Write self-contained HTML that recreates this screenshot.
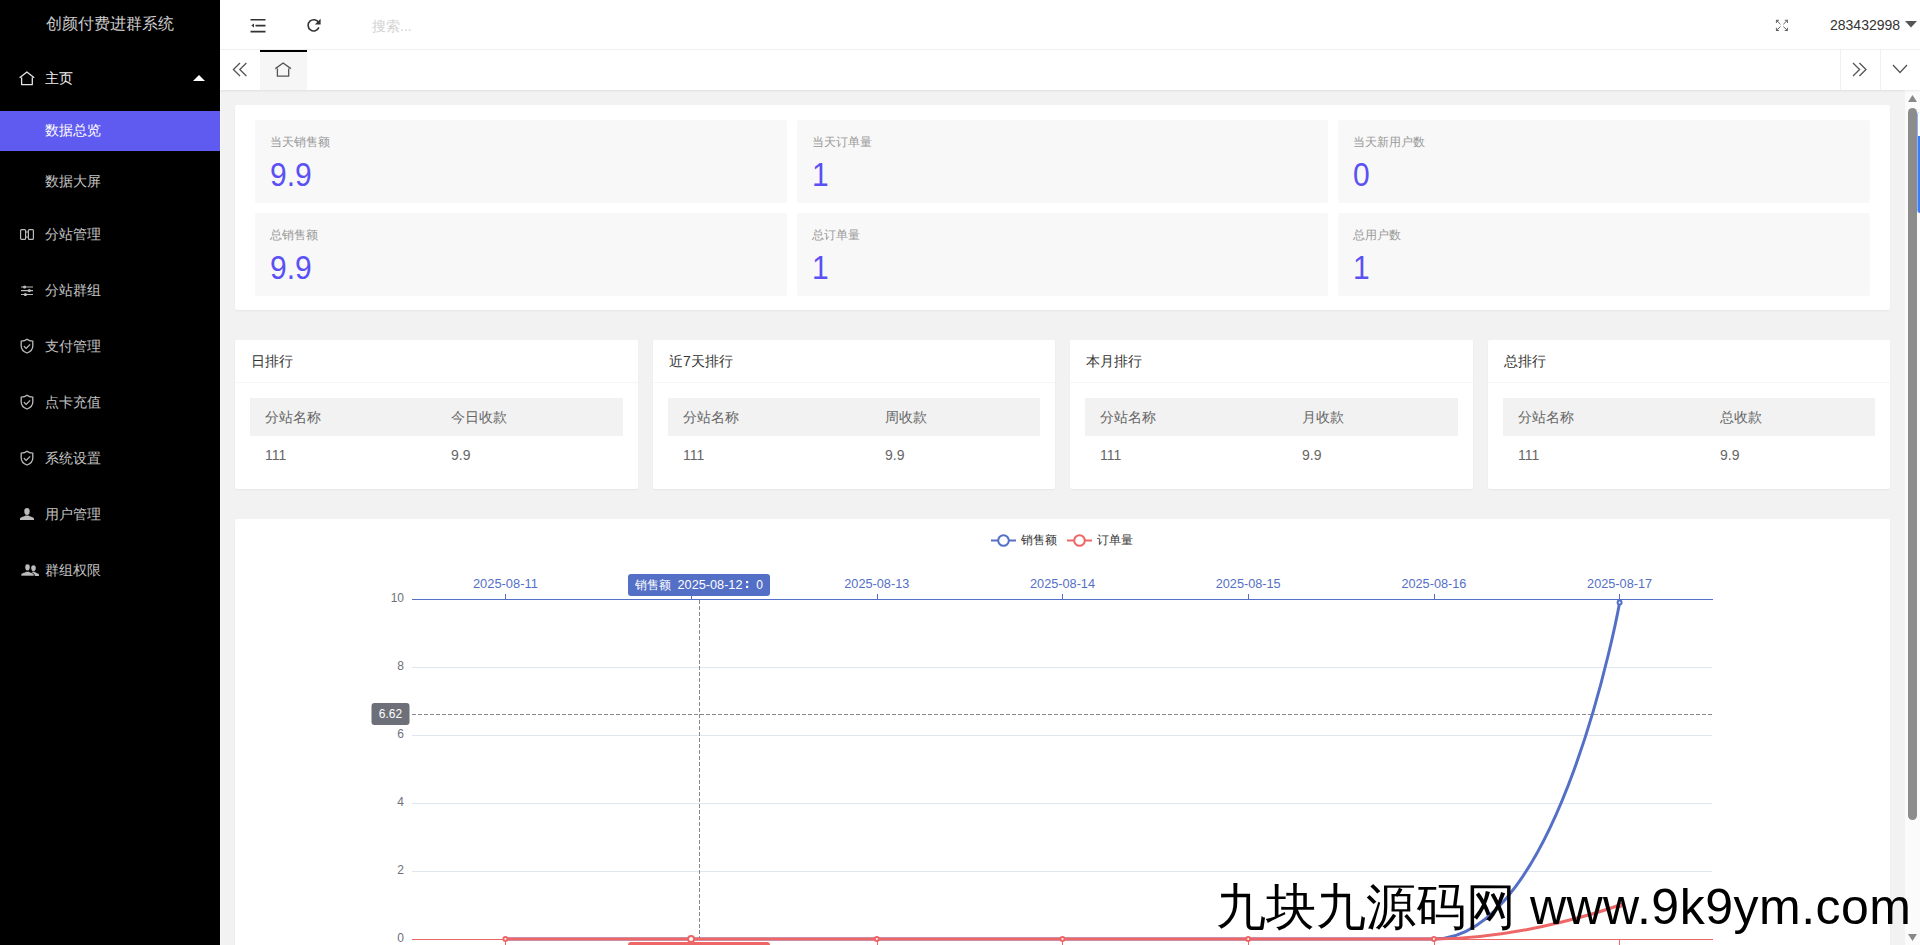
<!DOCTYPE html>
<html><head><meta charset="utf-8">
<style>
*{margin:0;padding:0;box-sizing:border-box}
html,body{width:1920px;height:945px;overflow:hidden;font-family:"Liberation Sans",sans-serif;background:#f2f2f2;position:relative}
.abs{position:absolute}
#side{position:absolute;left:0;top:0;width:220px;height:945px;background:#000}
#side .logo{position:absolute;left:0;top:0;width:220px;height:50px;line-height:48px;text-align:center;color:#ccc;font-size:16px}
.mi{position:absolute;left:0;width:220px;height:40px;color:#c4c4c4;font-size:14px}
.mi span{position:absolute;left:45px;top:0;line-height:40px}
.mi svg{position:absolute}
#hdr{position:absolute;left:220px;top:0;width:1700px;height:50px;background:#fff;border-bottom:1px solid #f0f0f0}
#tabs{position:absolute;left:220px;top:50px;width:1700px;height:40px;background:#fff;box-shadow:0 1px 2px rgba(0,0,0,.08)}
.card{position:absolute;background:#fff;border-radius:2px;box-shadow:0 1px 2px 0 rgba(0,0,0,.05)}
.tile{position:absolute;background:#f8f8f8;border-radius:2px}
.tile .lb{position:absolute;left:15px;top:13px;font-size:12px;color:#999;line-height:18px}
.tile .v{position:absolute;left:15px;top:36px;font-size:30px;color:#5b50f4;line-height:36px;transform:scaleY(1.1);transform-origin:0 8px}
.rk .t{position:absolute;left:16px;top:0;height:42px;line-height:42px;font-size:14px;color:#333}
.rk .ln{position:absolute;left:0;top:42px;width:100%;height:1px;background:#f6f6f6}
.rk .th{position:absolute;left:15px;top:58px;height:38px;background:#f2f2f2}
.rk .th span,.rk .tr span{position:absolute;font-size:14px;color:#666;line-height:38px}
.rk .tr{position:absolute;left:15px;top:96px;height:38px}
#sb{position:absolute;left:1905px;top:90px;width:15px;height:855px;background:#fbfbfb}
#tabs{z-index:2}
</style></head><body>
<div id="side">
  <div class="logo">创颜付费进群系统</div>
  <div class="mi" style="top:58px;color:#f2f2f2"><svg style="left:19px;top:13px" width="16" height="16" viewBox="0 0 16 16"><path d="M0.6 6.7 L7.9 1 L15.2 6.7 M2.6 6.5 V13.6 H13.3 V6.5" fill="none" stroke="#e6e6e6" stroke-width="1.3" stroke-linejoin="round"/></svg><span style="font-weight:500">主页</span>
    <svg style="left:193px;top:16px" width="12" height="8" viewBox="0 0 12 8"><path d="M0 7 L6 1 L12 7Z" fill="#fff"/></svg></div>
  <div class="mi" style="top:111px;background:#5f5af0;color:#fff"><span style="font-weight:500;top:-1px">数据总览</span></div>
  <div class="mi" style="top:161px"><span>数据大屏</span></div>
  <div class="mi" style="top:214px"><svg style="left:20px;top:15px" width="14" height="11" viewBox="0 0 14 11"><rect x="0.6" y="0.6" width="5" height="9.8" rx="1" fill="none" stroke="#bbb" stroke-width="1.2"/><rect x="8.4" y="0.6" width="5" height="9.8" rx="1" fill="none" stroke="#bbb" stroke-width="1.2"/><path d="M5.6 3 H8.4 M5.6 8 H8.4" stroke="#bbb" stroke-width="1"/></svg><span>分站管理</span></div>
  <div class="mi" style="top:270px"><svg style="left:21px;top:14px" width="12" height="12" viewBox="0 0 12 12"><path d="M0 3 H12 M0 6.6 H12 M0 10.5 H12" stroke="#bbb" stroke-width="1.1"/><circle cx="3.6" cy="3" r="1.6" fill="#bbb"/><circle cx="8.3" cy="6.6" r="1.6" fill="#bbb"/><circle cx="4.4" cy="10.5" r="1.6" fill="#bbb"/></svg><span>分站群组</span></div>
  <div class="mi" style="top:326px"><svg style="left:20px;top:12px" width="15" height="16" viewBox="0 0 15 16"><path d="M7 1.2 C5.6 2.4 3.2 3 1.2 3.1 V8 C1.2 11.3 3.6 13.7 7 15 C10.4 13.7 12.8 11.3 12.8 8 V3.1 C10.8 3 8.4 2.4 7 1.2Z" fill="none" stroke="#bbb" stroke-width="1.3" stroke-linejoin="round"/><path d="M3.9 8.2 L6.2 10.4 L10.1 6.4" fill="none" stroke="#bbb" stroke-width="1.3"/></svg><span>支付管理</span></div>
  <div class="mi" style="top:382px"><svg style="left:20px;top:12px" width="15" height="16" viewBox="0 0 15 16"><path d="M7 1.2 C5.6 2.4 3.2 3 1.2 3.1 V8 C1.2 11.3 3.6 13.7 7 15 C10.4 13.7 12.8 11.3 12.8 8 V3.1 C10.8 3 8.4 2.4 7 1.2Z" fill="none" stroke="#bbb" stroke-width="1.3" stroke-linejoin="round"/><path d="M3.9 8.2 L6.2 10.4 L10.1 6.4" fill="none" stroke="#bbb" stroke-width="1.3"/></svg><span>点卡充值</span></div>
  <div class="mi" style="top:438px"><svg style="left:20px;top:12px" width="15" height="16" viewBox="0 0 15 16"><path d="M7 1.2 C5.6 2.4 3.2 3 1.2 3.1 V8 C1.2 11.3 3.6 13.7 7 15 C10.4 13.7 12.8 11.3 12.8 8 V3.1 C10.8 3 8.4 2.4 7 1.2Z" fill="none" stroke="#bbb" stroke-width="1.3" stroke-linejoin="round"/><path d="M3.9 8.2 L6.2 10.4 L10.1 6.4" fill="none" stroke="#bbb" stroke-width="1.3"/></svg><span>系统设置</span></div>
  <div class="mi" style="top:494px"><svg style="left:20px;top:13px" width="14" height="14" viewBox="0 0 14 14"><path d="M7 1 C8.8 1 9.7 2.2 9.7 4.2 C9.7 6.2 8.8 8 7 8 C5.2 8 4.3 6.2 4.3 4.2 C4.3 2.2 5.2 1 7 1Z M5.6 8.6 C4.6 9.6 0.5 10.2 0 11.4 V13 H14 V11.4 C13.5 10.2 9.4 9.6 8.4 8.6Z" fill="#bbb"/></svg><span>用户管理</span></div>
  <div class="mi" style="top:550px"><svg style="left:21px;top:13px" width="18" height="14" viewBox="0 0 18 14"><path d="M12.5 2.3 C14 2.3 14.8 3.4 14.8 5 C14.8 6.7 14 8.2 12.5 8.2 C11 8.2 10.2 6.7 10.2 5 C10.2 3.4 11 2.3 12.5 2.3Z M11.4 8.8 C11 9.2 10.8 9.4 10.6 9.5 C11.8 10 13.2 10.8 13.6 12 V13 H18 V11.6 C17.6 10.6 14.6 10 13.6 8.8Z" fill="#bbb"/><path d="M6.5 1 C8.2 1 9.1 2.2 9.1 4.1 C9.1 6 8.2 7.8 6.5 7.8 C4.8 7.8 3.9 6 3.9 4.1 C3.9 2.2 4.8 1 6.5 1Z M5.2 8.4 C4.2 9.3 0.5 9.9 0 11.2 V13 H13 V11.2 C12.5 9.9 8.8 9.3 7.8 8.4Z" fill="#bbb" stroke="#000" stroke-width="0.6"/></svg><span>群组权限</span></div>
</div>
<div class="abs" style="left:220px;top:90px;width:1px;height:855px;background:#f9f9f9"></div>
<div id="hdr">
  <svg class="abs" style="left:30px;top:18px" width="16" height="15" viewBox="0 0 16 15"><path d="M0.5 1.8 H15.5 M5.5 7.6 H15.5 M0.5 13.6 H15.5" stroke="#333" stroke-width="1.6"/><path d="M1.3 7.6 L4 5.6 V9.6Z" fill="#333"/></svg>
  <svg class="abs" style="left:86px;top:17px" width="16" height="16" viewBox="0 0 16 16"><path d="M12.6 5.6 A5.6 5.6 0 1 0 12.9 10.4" fill="none" stroke="#333" stroke-width="1.6"/><path d="M14.6 1.8 V7.6 H8.8Z" fill="#333"/></svg>
  <div class="abs" style="left:152px;top:1px;line-height:50px;font-size:14px;color:#d2d2d2">搜索...</div>
  <svg class="abs" style="left:1555px;top:18px" width="14" height="15" viewBox="0 0 14 15"><g fill="none" stroke="#5a5a5a" stroke-width="0.95" stroke-linecap="round" stroke-linejoin="round"><path d="M3.6 2.3 H1.4 V4.6 M1.4 2.3 L5.2 6"/><path d="M10.2 2.3 H12.4 V4.6 M12.4 2.3 L8.6 6"/><path d="M1.4 10.2 V12.5 H3.6 M1.4 12.5 L5.2 8.8"/><path d="M12.4 10.2 V12.5 H10.2 M12.4 12.5 L8.6 8.8"/></g></svg>
  <div class="abs" style="left:1610px;top:0;line-height:50px;font-size:14px;color:#333">283432998</div>
  <svg class="abs" style="left:1685px;top:21px" width="12" height="7" viewBox="0 0 12 7"><path d="M0 0 H12 L6 6.5Z" fill="#555"/></svg>
</div>
<div id="tabs">
  <svg class="abs" style="left:12px;top:12px" width="16" height="16" viewBox="0 0 16 16"><path d="M8 1 L1.4 7.5 L8 14 M14.4 1 L7.8 7.5 L14.4 14" fill="none" stroke="#555" stroke-width="1.3"/></svg>
  <div class="abs" style="left:40px;top:0;width:47px;height:40px;background:#f6f6f6;border-top:2px solid #000"></div>
  <svg class="abs" style="left:55px;top:11px" width="17" height="17" viewBox="0 0 17 17"><path d="M0.3 7.6 L8.1 2.0 L15.9 7.6 M2.4 7.4 V15.2 H13.7 V7.4" fill="none" stroke="#555" stroke-width="1.3" stroke-linejoin="round"/></svg>
  <div class="abs" style="left:1620px;top:0;width:1px;height:40px;background:#f0f0f0"></div>
  <div class="abs" style="left:1660px;top:0;width:1px;height:40px;background:#f0f0f0"></div>
  <svg class="abs" style="left:1632px;top:12px" width="16" height="16" viewBox="0 0 16 16"><path d="M1 1 L7.6 7.5 L1 14 M7.4 1 L14 7.5 L7.4 14" fill="none" stroke="#555" stroke-width="1.3"/></svg>
  <svg class="abs" style="left:1672px;top:14px" width="16" height="10" viewBox="0 0 16 10"><path d="M1 1 L8 8.5 L15 1" fill="none" stroke="#555" stroke-width="1.3"/></svg>
</div>
<div class="card" style="left:235px;top:105px;width:1655px;height:205px">
  <div class="tile" style="left:20px;top:15px;width:532px;height:83px"><div class="lb">当天销售额</div><div class="v">9.9</div></div>
  <div class="tile" style="left:562px;top:15px;width:531px;height:83px"><div class="lb">当天订单量</div><div class="v">1</div></div>
  <div class="tile" style="left:1103px;top:15px;width:532px;height:83px"><div class="lb">当天新用户数</div><div class="v">0</div></div>
  <div class="tile" style="left:20px;top:108px;width:532px;height:83px"><div class="lb">总销售额</div><div class="v">9.9</div></div>
  <div class="tile" style="left:562px;top:108px;width:531px;height:83px"><div class="lb">总订单量</div><div class="v">1</div></div>
  <div class="tile" style="left:1103px;top:108px;width:532px;height:83px"><div class="lb">总用户数</div><div class="v">1</div></div>
</div>
<div class="card rk" style="left:235px;top:340px;width:403px;height:149px">
  <div class="t">日排行</div><div class="ln"></div>
  <div class="th" style="width:373px"><span style="left:15px">分站名称</span><span style="left:201px">今日收款</span></div>
  <div class="tr"><span style="left:15px">111</span><span style="left:201px">9.9</span></div>
</div>
<div class="card rk" style="left:653px;top:340px;width:402px;height:149px">
  <div class="t">近7天排行</div><div class="ln"></div>
  <div class="th" style="width:372px"><span style="left:15px">分站名称</span><span style="left:217px">周收款</span></div>
  <div class="tr"><span style="left:15px">111</span><span style="left:217px">9.9</span></div>
</div>
<div class="card rk" style="left:1070px;top:340px;width:403px;height:149px">
  <div class="t">本月排行</div><div class="ln"></div>
  <div class="th" style="width:373px"><span style="left:15px">分站名称</span><span style="left:217px">月收款</span></div>
  <div class="tr"><span style="left:15px">111</span><span style="left:217px">9.9</span></div>
</div>
<div class="card rk" style="left:1488px;top:340px;width:402px;height:149px">
  <div class="t">总排行</div><div class="ln"></div>
  <div class="th" style="width:372px"><span style="left:15px">分站名称</span><span style="left:217px">总收款</span></div>
  <div class="tr"><span style="left:15px">111</span><span style="left:217px">9.9</span></div>
</div>
<div class="card" style="left:235px;top:519px;width:1655px;height:500px"></div>
<svg class="abs" id="chart" style="left:0;top:0" width="1920" height="945" viewBox="0 0 1920 945" font-family="Liberation Sans, sans-serif">
<text x="404" y="602.0" text-anchor="end" font-size="12" fill="#6e7079">10</text>
<line x1="412" y1="667.5" x2="1712" y2="667.5" stroke="#e0e6f1" stroke-width="1"/>
<text x="404" y="670.0" text-anchor="end" font-size="12" fill="#6e7079">8</text>
<line x1="412" y1="735.5" x2="1712" y2="735.5" stroke="#e0e6f1" stroke-width="1"/>
<text x="404" y="738.0" text-anchor="end" font-size="12" fill="#6e7079">6</text>
<line x1="412" y1="803.5" x2="1712" y2="803.5" stroke="#e0e6f1" stroke-width="1"/>
<text x="404" y="806.0" text-anchor="end" font-size="12" fill="#6e7079">4</text>
<line x1="412" y1="871.5" x2="1712" y2="871.5" stroke="#e0e6f1" stroke-width="1"/>
<text x="404" y="874.0" text-anchor="end" font-size="12" fill="#6e7079">2</text>
<text x="404" y="942.0" text-anchor="end" font-size="12" fill="#6e7079">0</text>
<line x1="412" y1="599.5" x2="1713" y2="599.5" stroke="#5470c6" stroke-width="1"/>
<line x1="505.5" y1="594" x2="505.5" y2="599" stroke="#5470c6" stroke-width="1"/>
<text x="472.9" y="588" font-size="12" fill="#5470c6" textLength="65" lengthAdjust="spacingAndGlyphs">2025-08-11</text>
<line x1="691.5" y1="594" x2="691.5" y2="599" stroke="#5470c6" stroke-width="1"/>
<text x="658.6" y="588" font-size="12" fill="#5470c6" textLength="65" lengthAdjust="spacingAndGlyphs">2025-08-12</text>
<line x1="877.5" y1="594" x2="877.5" y2="599" stroke="#5470c6" stroke-width="1"/>
<text x="844.3" y="588" font-size="12" fill="#5470c6" textLength="65" lengthAdjust="spacingAndGlyphs">2025-08-13</text>
<line x1="1062.5" y1="594" x2="1062.5" y2="599" stroke="#5470c6" stroke-width="1"/>
<text x="1030.0" y="588" font-size="12" fill="#5470c6" textLength="65" lengthAdjust="spacingAndGlyphs">2025-08-14</text>
<line x1="1248.5" y1="594" x2="1248.5" y2="599" stroke="#5470c6" stroke-width="1"/>
<text x="1215.7" y="588" font-size="12" fill="#5470c6" textLength="65" lengthAdjust="spacingAndGlyphs">2025-08-15</text>
<line x1="1434.5" y1="594" x2="1434.5" y2="599" stroke="#5470c6" stroke-width="1"/>
<text x="1401.4" y="588" font-size="12" fill="#5470c6" textLength="65" lengthAdjust="spacingAndGlyphs">2025-08-16</text>
<line x1="1619.5" y1="594" x2="1619.5" y2="599" stroke="#5470c6" stroke-width="1"/>
<text x="1587.1" y="588" font-size="12" fill="#5470c6" textLength="65" lengthAdjust="spacingAndGlyphs">2025-08-17</text>
<line x1="412" y1="939.5" x2="1713" y2="939.5" stroke="#ee6666" stroke-width="1"/>
<line x1="505.5" y1="940" x2="505.5" y2="945" stroke="#ee6666" stroke-width="1"/>
<line x1="691.5" y1="940" x2="691.5" y2="945" stroke="#ee6666" stroke-width="1"/>
<line x1="877.5" y1="940" x2="877.5" y2="945" stroke="#ee6666" stroke-width="1"/>
<line x1="1062.5" y1="940" x2="1062.5" y2="945" stroke="#ee6666" stroke-width="1"/>
<line x1="1248.5" y1="940" x2="1248.5" y2="945" stroke="#ee6666" stroke-width="1"/>
<line x1="1434.5" y1="940" x2="1434.5" y2="945" stroke="#ee6666" stroke-width="1"/>
<line x1="1619.5" y1="940" x2="1619.5" y2="945" stroke="#ee6666" stroke-width="1"/>
<line x1="699.5" y1="600" x2="699.5" y2="939" stroke="#8a8a8a" stroke-width="1" stroke-dasharray="4 2"/>
<line x1="412" y1="714.5" x2="1712" y2="714.5" stroke="#8a8a8a" stroke-width="1" stroke-dasharray="4 2"/>
<path d="M505.36 939.00 C505.36 939.00 598.21 939.00 691.07 939.00 C783.93 939.00 783.93 939.00 876.79 939.00 C969.64 939.00 969.64 939.00 1062.50 939.00 C1155.36 939.00 1155.36 939.00 1248.21 939.00 C1341.07 939.00 1373.44 939.00 1433.93 939.00 C1559.15 939.00 1619.64 602.40 1619.64 602.40" fill="none" stroke="#5470c6" stroke-width="3.0"/>
<path d="M505.36 939.00 C505.36 939.00 598.21 939.00 691.07 939.00 C783.93 939.00 783.93 939.00 876.79 939.00 C969.64 939.00 969.64 939.00 1062.50 939.00 C1155.36 939.00 1155.36 939.00 1248.21 939.00 C1341.07 939.00 1341.84 939.00 1433.93 939.00 C1527.55 939.00 1619.64 905.00 1619.64 905.00" fill="none" stroke="#ee6666" stroke-width="3.0"/>
<circle cx="1619.6" cy="602.4" r="2" fill="#fff" stroke="#5470c6" stroke-width="2"/>
<circle cx="505.4" cy="939.0" r="2" fill="#fff" stroke="#ee6666" stroke-width="2"/>
<circle cx="691.1" cy="939.0" r="3" fill="#fff" stroke="#ee6666" stroke-width="2"/>
<circle cx="876.8" cy="939.0" r="2" fill="#fff" stroke="#ee6666" stroke-width="2"/>
<circle cx="1062.5" cy="939.0" r="2" fill="#fff" stroke="#ee6666" stroke-width="2"/>
<circle cx="1248.2" cy="939.0" r="2" fill="#fff" stroke="#ee6666" stroke-width="2"/>
<circle cx="1433.9" cy="939.0" r="2" fill="#fff" stroke="#ee6666" stroke-width="2"/>
<circle cx="1619.6" cy="905.0" r="2" fill="#fff" stroke="#ee6666" stroke-width="2"/>
<rect x="628" y="574" width="142" height="22" rx="3" fill="#5470c6"/>
<text x="635" y="589" font-size="12" fill="#fff">销售额</text><text x="677.5" y="588.5" font-size="12" fill="#fff" textLength="65" lengthAdjust="spacingAndGlyphs">2025-08-12</text><rect x="746" y="581" width="2.2" height="2.2" fill="#fff"/><rect x="746" y="585.8" width="2.2" height="2.2" fill="#fff"/><text x="756.3" y="588.5" font-size="12" fill="#fff">0</text>
<rect x="628" y="942" width="142" height="22" rx="3" fill="#ee6666"/>
<rect x="371.5" y="703" width="38" height="22" rx="3" fill="#6e7079"/>
<text x="390.5" y="718" text-anchor="middle" font-size="12" fill="#fff">6.62</text>
<line x1="991" y1="540.5" x2="1016" y2="540.5" stroke="#5470c6" stroke-width="2"/><circle cx="1003.5" cy="540.5" r="5.3" fill="#fff" stroke="#5470c6" stroke-width="2"/>
<text x="1021" y="543.5" font-size="12" fill="#333">销售额</text>
<line x1="1067" y1="540.5" x2="1092" y2="540.5" stroke="#ee6666" stroke-width="2"/><circle cx="1079.5" cy="540.5" r="5.3" fill="#fff" stroke="#ee6666" stroke-width="2"/>
<text x="1097" y="543.5" font-size="12" fill="#333">订单量</text>
</svg>
<div class="abs" style="z-index:5;left:1216px;top:877px;font-size:50px;line-height:60px;color:#000;white-space:nowrap"><span style="font-weight:500">九块九源码网</span> <span style="letter-spacing:.5px">www.9k9ym.com</span></div>
<div id="sb">
  <svg class="abs" style="left:3px;top:5px" width="9" height="7" viewBox="0 0 9 7"><path d="M4.5 0 L9 7 H0Z" fill="#888"/></svg>
  <div class="abs" style="left:3px;top:18px;width:9px;height:712px;border-radius:4.5px;background:#8c8c8c"></div>
  <svg class="abs" style="left:3px;top:844px" width="9" height="7" viewBox="0 0 9 7"><path d="M0 0 H9 L4.5 7Z" fill="#888"/></svg>
</div>
<div class="abs" style="left:1917px;top:112px;width:3px;height:101px;background:linear-gradient(#fff 0,#fff 24px,#3d7cf5 24px);border-left:1px solid #8fb4f8;border-radius:3px 0 0 3px"></div>
</body></html>
